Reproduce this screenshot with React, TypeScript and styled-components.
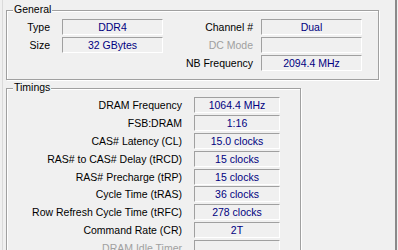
import React from 'react';
import styled, { createGlobalStyle } from 'styled-components';

const GlobalStyle = createGlobalStyle`
    html, body {
        margin: 0;
        padding: 0;
        background: #f0f0f0;
    }
`;

const Page = styled.div`
    width: 398px;
    height: 250px;
    overflow: hidden;
    background: #f0f0f0;
    font-family: "Liberation Sans", Arial, sans-serif;
    font-size: 10.5px;
    color: #000;
`;

const TabPage = styled.div`
    box-sizing: border-box;
    margin-left: 2px;
    width: 395px;
    min-height: 250px;
    padding: 10px 0 0 3px;
    border-left: 1px solid #dadada;
    border-right: 2px solid #8a8a8a;
`;

const Group = styled.div<{ $width: number; $height: number; $gap?: number }>`
    position: relative;
    box-sizing: border-box;
    width: ${(p) => p.$width}px;
    height: ${(p) => p.$height}px;
    margin-top: ${(p) => p.$gap ?? 0}px;
    border: 1px solid #a0a0a0;
    box-shadow: 1px 1px 0 #fff, inset 1px 1px 0 #fff;
`;

const GroupTitle = styled.span`
    position: absolute;
    top: -8px;
    left: 6px;
    padding: 0 1px;
    line-height: 13px;
    background: #f0f0f0;
`;

const Grid = styled.div<{ $cols: string; $rowGap: number }>`
    display: grid;
    grid-template-columns: ${(p) => p.$cols};
    grid-auto-rows: 16px;
    row-gap: ${(p) => p.$rowGap}px;
    padding-top: 8px;
`;

const Label = styled.div<{ $pad: number; $disabled?: boolean }>`
    text-align: right;
    padding-right: ${(p) => p.$pad}px;
    line-height: 16px;
    white-space: nowrap;
    color: ${(p) => (p.$disabled ? '#a0a0a0' : '#000')};
`;

const Value = styled.div`
    box-sizing: border-box;
    height: 16px;
    border-top: 1px solid #a0a0a0;
    border-left: 1px solid #a0a0a0;
    border-right: 1px solid #fff;
    border-bottom: 1px solid #fff;
    line-height: 14px;
    text-align: center;
    white-space: nowrap;
    color: #000080;
`;

type Field = { label: string; value: string; disabled?: boolean } | null;

// two columns per row in the General frame
const general: [Field, Field][] = [
    [{ label: 'Type', value: 'DDR4' }, { label: 'Channel #', value: 'Dual' }],
    [{ label: 'Size', value: '32 GBytes' }, { label: 'DC Mode', value: '', disabled: true }],
    [null, { label: 'NB Frequency', value: '2094.4 MHz' }],
];

const timings: { label: string; value: string; disabled?: boolean }[] = [
    { label: 'DRAM Frequency', value: '1064.4 MHz' },
    { label: 'FSB:DRAM', value: '1:16' },
    { label: 'CAS# Latency (CL)', value: '15.0 clocks' },
    { label: 'RAS# to CAS# Delay (tRCD)', value: '15 clocks' },
    { label: 'RAS# Precharge (tRP)', value: '15 clocks' },
    { label: 'Cycle Time (tRAS)', value: '36 clocks' },
    { label: 'Row Refresh Cycle Time (tRFC)', value: '278 clocks' },
    { label: 'Command Rate (CR)', value: '2T' },
    { label: 'DRAM Idle Timer', value: '', disabled: true },
];

function App() {
    return (
        <Page>
            <GlobalStyle />
            <TabPage>
                <Group $width={373} $height={70}>
                    <GroupTitle>General</GroupTitle>
                    <Grid $cols="55px 101px 98px 101px" $rowGap={2}>
                        {general.map((row, i) =>
                            row.map((f, j) =>
                                f ? (
                                    <React.Fragment key={`${i}-${j}`}>
                                        <Label $pad={j === 0 ? 12 : 8} $disabled={f.disabled}>
                                            {f.label}
                                        </Label>
                                        <Value>{f.value}</Value>
                                    </React.Fragment>
                                ) : (
                                    <React.Fragment key={`${i}-${j}`}>
                                        <span />
                                        <span />
                                    </React.Fragment>
                                )
                            )
                        )}
                    </Grid>
                </Group>

                <Group $width={295} $height={180} $gap={8}>
                    <GroupTitle>Timings</GroupTitle>
                    <Grid $cols="187px 86px" $rowGap={1.9}>
                        {timings.map((t) => (
                            <React.Fragment key={t.label}>
                                <Label $pad={12} $disabled={t.disabled}>
                                    {t.label}
                                </Label>
                                <Value>{t.value}</Value>
                            </React.Fragment>
                        ))}
                    </Grid>
                </Group>
            </TabPage>
        </Page>
    );
}

export default App;
